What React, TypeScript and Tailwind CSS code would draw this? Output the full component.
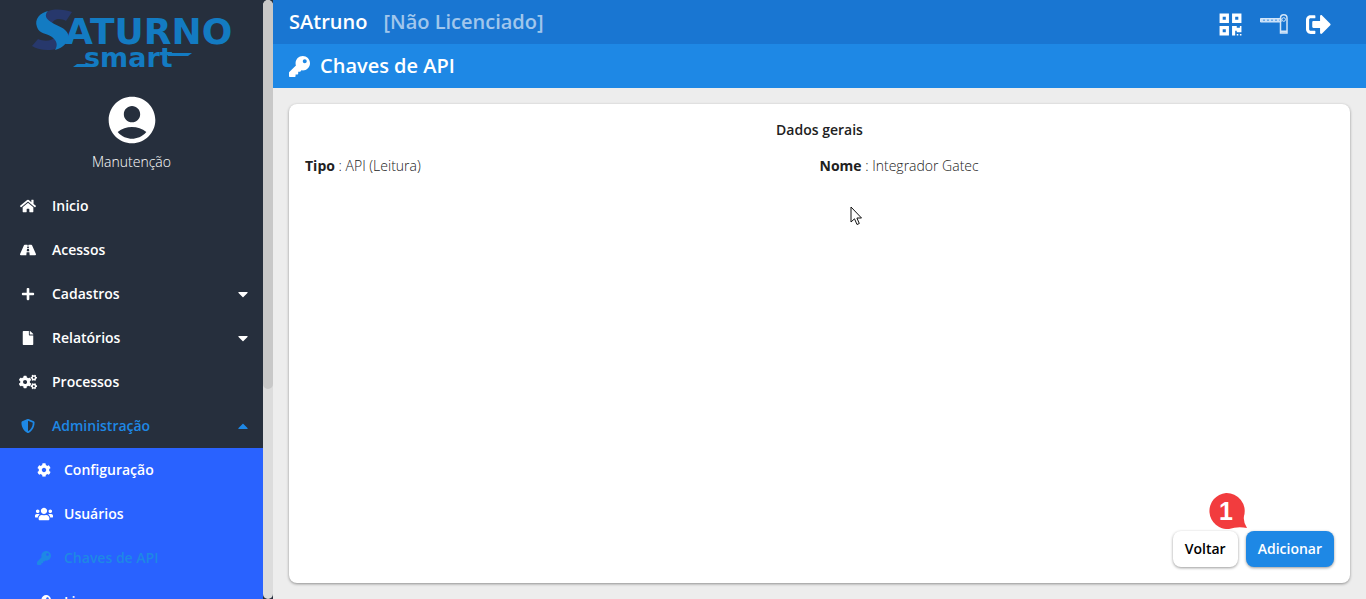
import type { ReactNode } from "react";
import {
  FaHome, FaRoad, FaPlus, FaFile, FaCogs, FaShieldAlt, FaCog, FaUsers, FaKey,
  FaQrcode, FaSignOutAlt, FaCaretDown, FaCaretUp,
} from "react-icons/fa";
import { MdAccountCircle } from "react-icons/md";

function Logo() {
  return (
    <svg width="204" height="64" viewBox="0 0 204 64" role="img" aria-label="Saturno smart" className="block">
      <path d="M15 15 C13 7 16 3 22 2 C29 1 36 2 42 4 L36 13 C30 10 24 10 21 17 Z" fill="#27386c" />
      <path d="M2 38 L8 31 C15 34 22 33 27 28 L29 40 C22 43 9 43 2 38 Z" fill="#27386c" />
      <path d="M18 3 C10 5 4 11 7 19 C9 26 17 25 22 29 C27 33 28 37 25 42 C33 40 40 33 38 26 C36 20 27 18 21 14 C16 11 14 7 18 3 Z" fill="#137bc2" />
      <text x="35" y="36" fontFamily="DejaVu Sans" fontWeight="700" fontSize="36" fill="#137bc2">ATURNO</text>
      <text x="54" y="59" fontFamily="DejaVu Sans" fontWeight="700" fontSize="27" fill="#137bc2">smart</text>
      <path d="M43 59 L47 56 H60 V59 Z" fill="#137bc2" />
      <path d="M138 45 H162 L158 48 H138 Z" fill="#137bc2" />
    </svg>
  );
}

function MenuItem({ icon, label, caret, active = false }: { icon: ReactNode; label: string; caret?: ReactNode; active?: boolean }) {
  return (
    <li>
      <a href="#" className={`flex h-11 items-center pr-3 pl-4 ${active ? "text-[#1e88e5]" : "text-white"}`}>
        <span className="flex w-6 justify-center">{icon}</span>
        <span className="ml-3 grow">{label}</span>
        {caret}
      </a>
    </li>
  );
}

function SubItem({ icon, label, active = false }: { icon: ReactNode; label: string; active?: boolean }) {
  return (
    <li>
      <a href="#" className={`flex h-11 items-center pl-8 ${active ? "text-[#1e88e5]" : "text-white"}`}>
        <span className="flex w-6 justify-center">{icon}</span>
        <span className="ml-2">{label}</span>
      </a>
    </li>
  );
}

function Sidebar() {
  return (
    <aside className="flex w-[273px] shrink-0 overflow-hidden bg-[#262f3d]">
      <div className="h-screen min-w-0 grow overflow-hidden">
        <div className="flex flex-col items-center pt-2">
          <Logo />
          <MdAccountCircle size={56} className="mt-5 text-white" />
          <span className="mt-1 text-sm leading-5 font-light text-white">Manutenção</span>
        </div>
        <nav className="mt-3 text-sm font-semibold">
          <ul>
            <MenuItem icon={<FaHome size={16} />} label="Inicio" />
            <MenuItem icon={<FaRoad size={16} />} label="Acessos" />
            <MenuItem icon={<FaPlus size={14} />} label="Cadastros" caret={<FaCaretDown size={16} />} />
            <MenuItem icon={<FaFile size={14} />} label="Relatórios" caret={<FaCaretDown size={16} />} />
            <MenuItem icon={<FaCogs size={18} />} label="Processos" />
            <MenuItem icon={<FaShieldAlt size={14} />} label="Administração" caret={<FaCaretUp size={16} />} active />
          </ul>
          <ul className="bg-[#2962ff]">
            <SubItem icon={<FaCog size={14} />} label="Configuração" />
            <SubItem icon={<FaUsers size={18} />} label="Usuários" />
            <SubItem icon={<FaKey size={14} />} label="Chaves de API" active />
            <SubItem icon={<FaKey size={14} />} label="Licenças" />
          </ul>
        </nav>
      </div>
      <div className="w-[10px] shrink-0 overflow-hidden rounded-full bg-[#dcdcdc]">
        <div className="h-[65%] rounded-full bg-[#c8c8c8]" />
      </div>
    </aside>
  );
}

function GateIcon() {
  return (
    <svg width="28" height="20" viewBox="0 0 28 20" fill="none" stroke="#d2e5f8" aria-hidden="true">
      <path d="M0.500 4.500 H21 V8 H0.500 Z" fill="#c4defa" />
      <path d="M3 6.250 H20" stroke="#6fabe6" strokeWidth="1.500" strokeDasharray="2 2" />
      <path d="M20.500 19 V4 A3.200 3.200 0 0 1 27 4 V19 Z" strokeWidth="1.500" />
      <circle cx="23.700" cy="5.500" r="1.800" />
      <path d="M21 17.500 H27" strokeWidth="2" />
    </svg>
  );
}

export default function App() {
  return (
    <div className="flex h-screen overflow-hidden bg-[#ededed] font-['Open_Sans',sans-serif] text-[#212121]">
      <Sidebar />
      <div className="flex min-w-0 grow flex-col">
        <header className="flex h-11 shrink-0 items-center bg-[#1976d2] px-4 text-xl font-semibold text-white">
          <span>SAtruno</span>
          <span className="ml-4 text-white/60">[Não Licenciado]</span>
          <div className="ml-auto flex items-center gap-4 pt-1 pr-[18px]">
            <button type="button" aria-label="QR code" className="flex w-7 justify-center"><FaQrcode size={25} /></button>
            <button type="button" aria-label="Cancela"><GateIcon /></button>
            <button type="button" aria-label="Sair" className="flex w-7 justify-center"><FaSignOutAlt size={25} /></button>
          </div>
        </header>
        <div className="flex h-11 shrink-0 items-center gap-2.5 bg-[#1e88e5] px-4 text-white">
          <FaKey size={21} />
          <h1 className="text-xl font-semibold">Chaves de API</h1>
        </div>
        <main className="flex min-h-0 grow flex-col p-4">
          <section className="flex grow flex-col rounded-lg bg-white p-4 text-sm shadow-[0_1px_3px_rgba(0,0,0,0.4)]">
            <h2 className="text-center leading-5 font-semibold">Dados gerais</h2>
            <div className="mt-4 grid grid-cols-2 leading-5 font-light">
              <p><b className="font-bold">Tipo</b> : API (Leitura)</p>
              <p><b className="font-bold">Nome</b> : Integrador Gatec</p>
            </div>
            <div className="mt-auto flex justify-end gap-2 font-semibold">
              <button type="button" className="h-9 rounded-lg bg-white px-3 text-black shadow-[0_1px_3px_rgba(0,0,0,0.4)]">Voltar</button>
              <div className="relative">
                <button type="button" className="h-9 rounded-lg bg-[#1e88e5] px-3 text-white shadow-[0_1px_3px_rgba(0,0,0,0.4)]">Adicionar</button>
                <svg width="40" height="38" viewBox="0 0 40 38" className="absolute -top-10 -left-[39px]" aria-hidden="true">
                  <path d="M19 2 A18 18 0 1 0 22 38 Q31 35 40 37 Q36 31 37 25 A18 18 0 0 0 19 2 Z" fill="#f23c3e" />
                  <text x="19" y="29" textAnchor="middle" fontFamily="Liberation Sans" fontWeight="700" fontSize="25" fill="#fff">1</text>
                </svg>
              </div>
            </div>
          </section>
        </main>
      </div>
      <svg width="12" height="20" viewBox="0 0 12 20" className="absolute top-[206px] left-[850px]" aria-hidden="true">
        <path d="M1 1 V16 L4.500 12.800 L7 18.500 L9.300 17.500 L6.900 12 H11.500 Z" fill="#fff" stroke="#111" />
      </svg>
    </div>
  );
}
